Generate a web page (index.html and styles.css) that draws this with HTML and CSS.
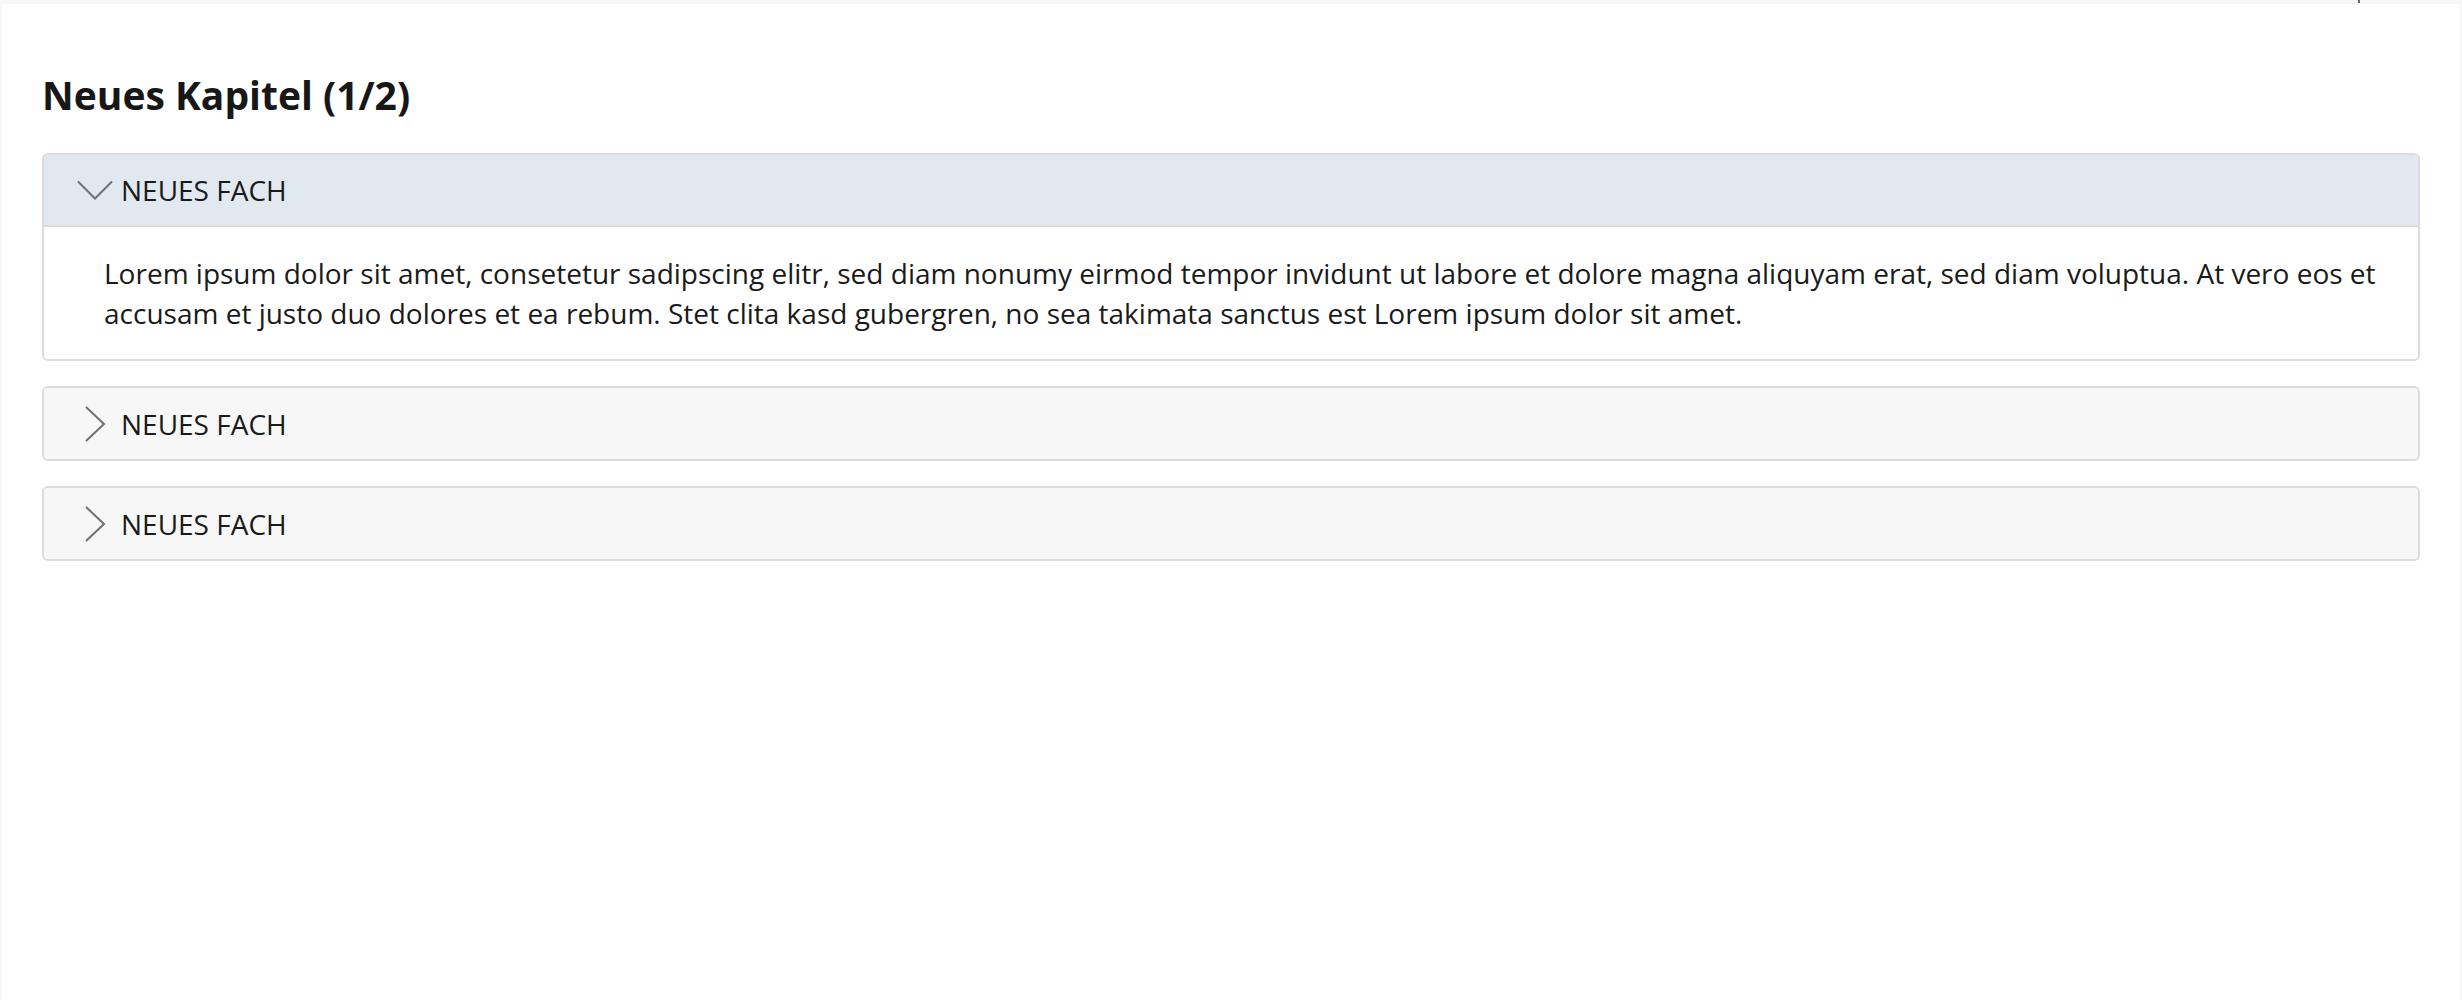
FILE: index.html
```html
<!DOCTYPE html>
<html lang="de">
<head>
<meta charset="utf-8">
<title>Neues Kapitel</title>
<link rel="stylesheet" href="styles.css">
</head>
<body>
<div class="topstrip"><span class="mark"></span></div>
<main class="panel">
  <h1 class="title">Neues Kapitel (1/2)</h1>
  <section class="acc open">
    <div class="acc-head">
      <svg class="chev" viewBox="0 0 36 36"><polyline points="1,9.5 18,26.5 35,9.5"/></svg>
      <span class="acc-label">NEUES FACH</span>
    </div>
    <div class="acc-body">
      <p>Lorem ipsum dolor sit amet, consetetur sadipscing elitr, sed diam nonumy eirmod tempor invidunt ut labore et dolore magna aliquyam erat, sed diam voluptua. At vero eos et accusam et justo duo dolores et ea rebum. Stet clita kasd gubergren, no sea takimata sanctus est Lorem ipsum dolor sit amet.</p>
    </div>
  </section>
  <section class="acc">
    <div class="acc-head">
      <svg class="chev" viewBox="0 0 36 36"><polyline points="9,1 27,18 9,35"/></svg>
      <span class="acc-label">NEUES FACH</span>
    </div>
  </section>
  <section class="acc">
    <div class="acc-head">
      <svg class="chev" viewBox="0 0 36 36"><polyline points="9,1 27,18 9,35"/></svg>
      <span class="acc-label">NEUES FACH</span>
    </div>
  </section>
</main>
</body>
</html>
```

FILE: styles.css
```css
html, body {
  margin: 0;
  padding: 0;
  height: 100%;
}
body {
  background: #f7f7f7;
  font-family: "Open Sans", "Noto Sans", sans-serif;
  color: #1a1a1a;
  display: flex;
  flex-direction: column;
}
.topstrip {
  height: 4px;
  display: flex;
  justify-content: flex-end;
  flex: none;
}
.mark {
  width: 2px;
  height: 3px;
  background: #666;
  margin-right: 102px;
}
.panel {
  flex: 1;
  background: #fff;
  margin: 0 2px;
  padding: 0 40px;
}
.title {
  font-size: 39px;
  font-weight: 700;
  line-height: 53px;
  margin: 64px 0 32px 0;
  color: #171717;
}
.acc {
  border: 2px solid #dcdcdc;
  border-radius: 6px;
  margin-bottom: 25px;
  overflow: hidden;
}
.acc-head {
  height: 71px;
  display: flex;
  align-items: center;
  padding-left: 33px;
  background: #f7f7f7;
}
.acc.open .acc-head {
  background: #e1e8ef;
  border-bottom: 2px solid #dcdcdc;
  height: 70px;
}
.chev {
  width: 36px;
  height: 36px;
  flex: none;
  fill: none;
  stroke: #707070;
  stroke-width: 2;
  margin-right: 8px;
}
.acc-label {
  font-size: 28px;
  color: #1a1a1a;
}
.acc-body {
  background: #fff;
  padding: 26px 40px 26px 60px;
}
.acc-body p {
  margin: 0;
  font-size: 28px;
  line-height: 40px;
  color: #1a1a1a;
}
```
